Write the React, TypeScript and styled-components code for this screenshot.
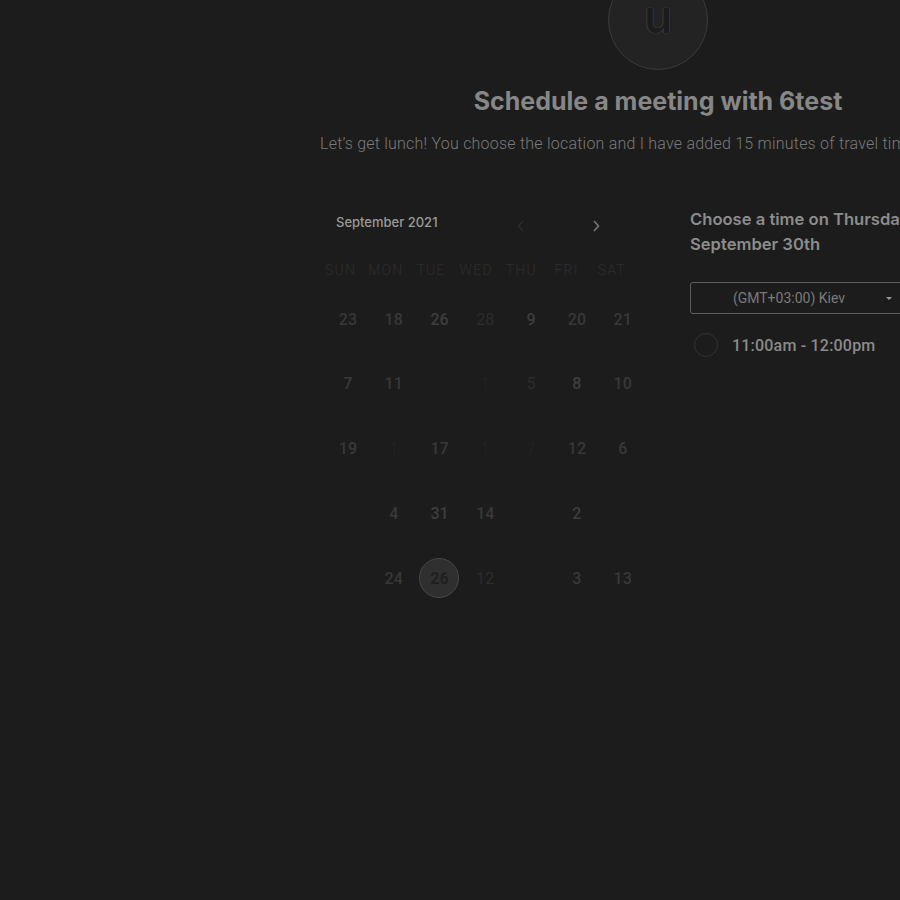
import React from "react";
import styled, { createGlobalStyle } from "styled-components";

const Global = createGlobalStyle`
  html, body { margin: 0; padding: 0; background: #1c1c1c; }
  body { width: 900px; height: 900px; overflow: hidden; font-family: Roboto, "Liberation Sans", sans-serif; }
  #root { width: 900px; height: 900px; overflow: hidden; }
`;

const Page = styled.div`
  width: 900px;
  height: 900px;
  background: #1c1c1c;
  overflow: hidden;
`;

const Main = styled.div`
  width: 680px;
  margin-left: 318px;
  margin-top: -30px;
  display: flex;
  flex-direction: column;
  align-items: center;
`;

const Avatar = styled.div`
  width: 100px;
  height: 100px;
  border-radius: 50%;
  background: #232323;
  border: 1px solid #3a3a3a;
  display: flex;
  align-items: center;
  justify-content: center;
  box-sizing: border-box;
  color: #1c1c1c;
  font-family: Inter, Roboto, sans-serif;
  font-size: 46px;
  font-weight: 600;
  line-height: 1;
  text-shadow: 0 0 1px #555, 0 0 1px #555;
  padding-bottom: 8px;
`;

const Title = styled.h1`
  margin: 17px 0 0;
  font-family: Inter, Roboto, sans-serif;
  font-weight: 700;
  font-size: 25px;
  line-height: 28px;
  color: #878787;
`;

const Subtitle = styled.p`
  margin: 20px 0 0 0;
  align-self: flex-start;
  padding-left: 2px;
  white-space: nowrap;
  font-family: Roboto, sans-serif;
  font-weight: 300;
  font-size: 16px;
  line-height: 18px;
  color: #7a7a7a;
  letter-spacing: 0.22px;
`;

const Columns = styled.div`
  align-self: stretch;
  display: flex;
  margin-top: 50px;
`;

const Calendar = styled.div`
  width: 324px;
  display: flex;
  flex-direction: column;
`;

const CalHeader = styled.div`
  display: flex;
  align-items: center;
  height: 30px;
  padding-left: 18px;
  margin-top: 4px;
`;

const Month = styled.div`
  font-family: Inter, Roboto, sans-serif;
  font-size: 13px;
  font-weight: 500;
  color: #9a9a9a;
  width: 175px;
`;

const Arrow = styled.div<{ $faint?: boolean }>`
  width: 20px;
  height: 20px;
  display: flex;
  align-items: center;
  justify-content: center;
  margin-top: 8px;
  margin-left: ${(p) => (p.$faint ? "0" : "55px")};
  color: ${(p) => (p.$faint ? "#2c2c2c" : "#777")};
`;

const Weekdays = styled.div`
  display: grid;
  grid-template-columns: repeat(7, 45.2px);
  margin-top: 25px;
  height: 18px;
`;

const Weekday = styled.div`
  text-align: center;
  font-size: 14px;
  font-weight: 300;
  letter-spacing: 1.2px;
  color: #2d2d2d;
  font-family: Roboto, sans-serif;
`;

const Days = styled.div`
  display: grid;
  grid-template-columns: repeat(7, 45.8px);
  grid-auto-rows: 64.8px;
  margin-left: 7px;
  margin-top: 18px;
`;

const Day = styled.div<{ $tone: number; $light?: boolean }>`
  display: flex;
  align-items: center;
  justify-content: center;
  height: 42px;
  font-family: Roboto, sans-serif;
  font-size: 16px;
  font-weight: ${(p) => (p.$light ? 400 : 500)};
  color: ${(p) => ["#1c1c1c", "#222", "#2c2c2c", "#383838", "#3e3e3e", "#444"][p.$tone]};
`;

const Selected = styled.div`
  width: 40px;
  height: 40px;
  border-radius: 50%;
  background: #2f2f2f;
  border: 1px solid #474747;
  box-sizing: border-box;
  display: flex;
  align-items: center;
  justify-content: center;
  color: #1e1e1e;
  font-weight: 700;
  font-size: 16px;
  text-shadow: 0 0 1px #3a3a3a;
`;

const TimePanel = styled.div`
  margin-left: 48px;
  display: flex;
  flex-direction: column;
  padding-top: 4px;
`;

const TimeTitle = styled.div`
  font-family: Inter, Roboto, sans-serif;
  font-weight: 600;
  font-size: 16.6px;
  line-height: 25px;
  color: #8c8c8c;
  width: 260px;
`;

const Select = styled.div`
  margin-top: 25px;
  width: 232px;
  height: 32px;
  box-sizing: border-box;
  border: 1px solid #5e5e5e;
  border-radius: 3px;
  display: flex;
  align-items: center;
  position: relative;
  font-family: Roboto, sans-serif;
  font-size: 14px;
  color: #7a7a7a;
`;

const SelectText = styled.span`
  width: 196px;
  text-align: center;
`;

const Caret = styled.span`
  position: absolute;
  left: 195px;
  top: 14px;
  width: 0;
  height: 0;
  border-left: 3.5px solid transparent;
  border-right: 3.5px solid transparent;
  border-top: 3.5px solid #999;
`;

const Slot = styled.div`
  display: flex;
  align-items: center;
  margin-top: 19px;
  margin-left: 4px;
  gap: 14px;
`;

const Radio = styled.div`
  width: 24px;
  height: 24px;
  border-radius: 50%;
  border: 1px solid #333;
  box-sizing: border-box;
`;

const SlotText = styled.span`
  font-family: Roboto, sans-serif;
  font-weight: 500;
  font-size: 16px;
  color: #8a8a8a;
  letter-spacing: 0.2px;
`;

type Cell = { t: string; tone: number; light?: boolean; sel?: boolean };

const rows: Cell[][] = [
  [
    { t: "23", tone: 3 },
    { t: "18", tone: 3 },
    { t: "26", tone: 4 },
    { t: "28", tone: 2, light: true },
    { t: "9", tone: 4 },
    { t: "20", tone: 3 },
    { t: "21", tone: 3 },
  ],
  [
    { t: "7", tone: 3 },
    { t: "11", tone: 3 },
    { t: "", tone: 0 },
    { t: "1", tone: 1, light: true },
    { t: "5", tone: 2, light: true },
    { t: "8", tone: 4 },
    { t: "10", tone: 3 },
  ],
  [
    { t: "19", tone: 3 },
    { t: "1", tone: 1, light: true },
    { t: "17", tone: 3 },
    { t: "1", tone: 1, light: true },
    { t: "7", tone: 1, light: true },
    { t: "12", tone: 3 },
    { t: "6", tone: 3 },
  ],
  [
    { t: "", tone: 0 },
    { t: "4", tone: 3 },
    { t: "31", tone: 4 },
    { t: "14", tone: 3 },
    { t: "", tone: 0 },
    { t: "2", tone: 4 },
    { t: "", tone: 0 },
  ],
  [
    { t: "", tone: 0 },
    { t: "24", tone: 3 },
    { t: "26", tone: 0, sel: true },
    { t: "12", tone: 2, light: true },
    { t: "", tone: 0 },
    { t: "3", tone: 3 },
    { t: "13", tone: 3 },
  ],
];

const weekdays = ["SUN", "MON", "TUE", "WED", "THU", "FRI", "SAT"];

export default function App() {
  return (
    <Page>
      <Global />
      <Main>
        <Avatar>u</Avatar>
        <Title>Schedule a meeting with 6test</Title>
        <Subtitle>
          Let’s get lunch! You choose the location and I have added 15 minutes of travel time
        </Subtitle>
        <Columns>
          <Calendar>
            <CalHeader>
              <Month>September 2021</Month>
              <Arrow $faint>
                <svg width="10" height="14" viewBox="0 0 10 14">
                  <path d="M7 2 L2.5 7 L7 12" fill="none" stroke="currentColor" strokeWidth="1.6" />
                </svg>
              </Arrow>
              <Arrow>
                <svg width="10" height="14" viewBox="0 0 10 14">
                  <path d="M3 2 L7.5 7 L3 12" fill="none" stroke="currentColor" strokeWidth="1.6" />
                </svg>
              </Arrow>
            </CalHeader>
            <Weekdays>
              {weekdays.map((w) => (
                <Weekday key={w}>{w}</Weekday>
              ))}
            </Weekdays>
            <Days>
              {rows.flat().map((c, i) => (
                <Day key={i} $tone={c.tone} $light={c.light}>
                  {c.sel ? <Selected>{c.t}</Selected> : c.t}
                </Day>
              ))}
            </Days>
          </Calendar>
          <TimePanel>
            <TimeTitle>Choose a time on Thursday, September 30th</TimeTitle>
            <Select>
              <SelectText>(GMT+03:00) Kiev</SelectText>
              <Caret />
            </Select>
            <Slot>
              <Radio />
              <SlotText>11:00am - 12:00pm</SlotText>
            </Slot>
          </TimePanel>
        </Columns>
      </Main>
    </Page>
  );
}
